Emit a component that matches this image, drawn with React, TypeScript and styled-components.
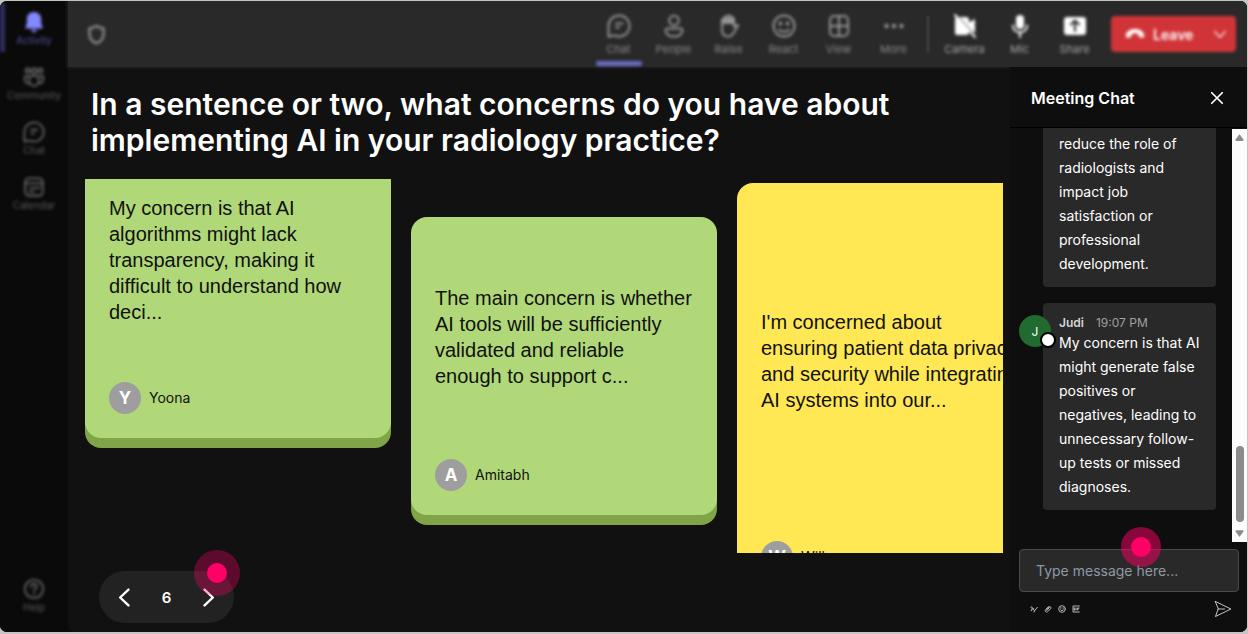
import React from "react";
import styled, { createGlobalStyle } from "styled-components";

const GlobalStyle = createGlobalStyle`
  * { box-sizing: border-box; }
  html, body, #root { height: 100%; }
  body {
    margin: 0;
    background: #c4c6c4;
    font-family: Inter, "Liberation Sans", sans-serif;
  }
  button { font: inherit; color: inherit; background: none; border: 0; padding: 0; cursor: pointer; }
  h1, h2, p { margin: 0; }
`;

const softFocus = "blur(1px) blur(1px)";

const Page = styled.div`
  height: 100%;
  padding: 1px 1px 2px 0;
`;

const Frame = styled.div`
  height: 100%;
  display: flex;
  overflow: hidden;
  border-radius: 7px;
  background: #0a0a0a;
`;

/* ---------- left rail ---------- */

const Rail = styled.nav`
  width: 68px;
  flex: none;
  display: flex;
  flex-direction: column;
  padding: 0 0 9px;
  background: #0a0a0a;
`;

const RailItem = styled.button<{ $active?: boolean; $last?: boolean }>`
  position: relative;
  height: 55px;
  display: flex;
  flex-direction: column;
  align-items: center;
  justify-content: center;
  gap: 1px;
  margin-top: ${(p) => (p.$last ? "auto" : "0")};
  color: ${(p) => (p.$active ? "#5252a0" : "#5c5c5c")};
  font-size: 10px;
  line-height: 12px;
  filter: ${softFocus};

  svg { color: ${(p) => (p.$active ? "#8489ff" : "#666")}; }

  &::before {
    content: "";
    position: absolute;
    left: 0;
    top: 2px;
    bottom: 4px;
    width: 5px;
    background: ${(p) => (p.$active ? "#2f2f60" : "transparent")};
  }
`;

const Content = styled.div`
  flex: 1;
  min-width: 0;
  display: flex;
  flex-direction: column;
  background: #111;
  border-radius: 0 0 0 7px;
`;

/* ---------- top toolbar ---------- */

const Toolbar = styled.header`
  height: 66px;
  flex: none;
  display: flex;
  align-items: center;
  padding: 0 11px 0 18px;
  background: #292929;
  box-shadow: 0 0 3px 1px #222;
`;

const ShieldSlot = styled.span`
  display: flex;
  margin-right: auto;
  color: #868686;
  filter: ${softFocus};
`;

const Tool = styled.button<{ $active?: boolean; $bright?: boolean }>`
  width: 55px;
  height: 66px;
  padding-top: 13px;
  display: flex;
  flex-direction: column;
  align-items: center;
  gap: 4px;
  color: ${(p) => (p.$bright ? "#a8a8a8" : "#8a8a8a")};
  font-size: 11px;
  line-height: 14px;
  filter: ${softFocus};

  svg { color: ${(p) => (p.$bright ? "#fff" : "#969696")}; }

  &::after {
    content: "";
    width: 46px;
    height: 5px;
    margin-top: 1px;
    border-radius: 2px;
    background: ${(p) => (p.$active ? "#6a6cc4" : "transparent")};
  }
`;

const Divider = styled.span`
  width: 2px;
  height: 36px;
  margin: 0 8px 0 6px;
  background: #444;
  filter: blur(1px);
`;

const LeaveButton = styled.button`
  width: 125px;
  height: 36px;
  margin-left: 9px;
  padding: 0 8px 0 14px;
  display: flex;
  align-items: center;
  gap: 8px;
  border-radius: 4px;
  background: #d13438;
  color: #fff;
  font-size: 14px;
  font-weight: 600;
  filter: ${softFocus};

  svg:last-child { margin-left: auto; }
`;

const Body = styled.div`
  flex: 1;
  min-height: 0;
  display: flex;
`;

/* ---------- question board ---------- */

const Stage = styled.main`
  flex: 1;
  min-width: 0;
  display: flex;
  flex-direction: column;
  padding: 19px 7px 9px 17px;
`;

const Question = styled.h1`
  max-width: 840px;
  margin-left: 6px;
  color: #fff;
  font-size: 30px;
  line-height: 36px;
  font-weight: 600;
`;

const Board = styled.section`
  flex: 1;
  min-height: 0;
  margin: 21px 0 18px;
  display: flex;
  align-items: flex-start;
  gap: 20px;
  overflow: hidden;
`;

const Card = styled.article<{ $tone: "green" | "yellow"; $tall?: boolean; $shift: number }>`
  width: 306px;
  height: ${(p) => (p.$tall ? 414 : 298)}px;
  flex: none;
  margin-top: ${(p) => p.$shift}px;
  padding: 24px;
  display: flex;
  flex-direction: column;
  gap: 26px;
  border-radius: 16px;
  background: ${(p) => (p.$tone === "green" ? "#b0d879" : "#ffe853")};
  box-shadow: 0 10px 0 ${(p) => (p.$tone === "green" ? "#7fa548" : "#c9b22c")};
  color: #111;
`;

const CardText = styled.p`
  flex: 1;
  display: flex;
  flex-direction: column;
  justify-content: center;
  font-family: "Liberation Sans", Arial, sans-serif;
  font-size: 20px;
  line-height: 26px;
  white-space: nowrap;
`;

const Author = styled.footer`
  display: flex;
  align-items: center;
  gap: 8px;
  font-size: 14px;
  line-height: 20px;
`;

const AuthorAvatar = styled.span`
  width: 32px;
  height: 32px;
  display: flex;
  align-items: center;
  justify-content: center;
  border-radius: 50%;
  background: #9e9e9e;
  color: #fff;
  font-size: 17px;
  font-weight: 700;
`;

const Pager = styled.div`
  position: relative;
  width: 135px;
  height: 52px;
  flex: none;
  margin-left: 14px;
  padding: 0 16px;
  display: flex;
  align-items: center;
  justify-content: space-between;
  border-radius: 26px;
  background: #222;
  color: #fff;
  font-size: 15px;
  font-weight: 600;

  button { display: flex; }
`;

const Hotspot = styled.span<{ $size: number; $alpha: number; $top: number; $left: string }>`
  position: absolute;
  top: ${(p) => p.$top}px;
  left: ${(p) => p.$left};
  width: ${(p) => p.$size}px;
  height: ${(p) => p.$size}px;
  display: flex;
  align-items: center;
  justify-content: center;
  border-radius: 50%;
  background: rgba(255, 0, 102, ${(p) => p.$alpha});
  pointer-events: none;

  &::after {
    content: "";
    width: 20px;
    height: 20px;
    border-radius: 50%;
    background: #ff0066;
  }
`;

/* ---------- meeting chat ---------- */

const ChatPanel = styled.aside`
  width: 237px;
  flex: none;
  display: flex;
  flex-direction: column;
  background: #0e0e0e;
`;

const ChatHeader = styled.header`
  height: 61px;
  flex: none;
  display: flex;
  align-items: center;
  justify-content: space-between;
  padding: 2px 23px 0 21px;
  border-bottom: 1px solid #000;
  color: #fff;

  h2 { font-size: 16px; line-height: 24px; font-weight: 600; }
  button { display: flex; }
`;

const ChatBody = styled.div`
  flex: 1;
  min-height: 0;
  display: flex;
  justify-content: space-between;
`;

const Messages = styled.div`
  flex: 1;
  min-width: 0;
  display: flex;
  flex-direction: column;
  justify-content: flex-end;
  gap: 16px;
  padding: 0 16px 32px 9px;
  overflow: hidden;
`;

const Message = styled.div`
  flex: none;
  display: flex;
  justify-content: flex-end;
`;

const ChatAvatar = styled.span`
  position: relative;
  z-index: 1;
  width: 32px;
  height: 32px;
  flex: none;
  margin: 12px -8px 0 0;
  display: flex;
  align-items: center;
  justify-content: center;
  border-radius: 50%;
  background: #216a30;
  color: #fff;
  font-size: 12px;

  &::after {
    content: "";
    position: absolute;
    right: -4px;
    bottom: 0;
    width: 12px;
    height: 12px;
    border: 2px solid #000;
    border-radius: 50%;
    background: #fff;
    right: -5px;
    bottom: -1px;
  }
`;

const Bubble = styled.div`
  width: 173px;
  padding: 11px 16px 11px;
  border-radius: 4px;
  background: #292929;
  color: #fff;
  font-size: 14px;
  line-height: 24px;
`;

const BubbleText = styled.p`
  display: flex;
  flex-direction: column;
  white-space: nowrap;
`;

const MessageMeta = styled.div`
  display: flex;
  gap: 12px;
  color: #a0a0a0;
  font-size: 12px;
  line-height: 17px;

  b { color: #d6d6d6; font-weight: 600; }
`;

const ScrollTrack = styled.div`
  width: 15px;
  margin-top: 1px;
  padding: 4px 3px 4px;
  display: flex;
  flex-direction: column;
  align-items: center;
  background: #fcfcfc;
`;

const ScrollThumb = styled.span`
  width: 8px;
  height: 76px;
  margin: auto 0 7px;
  border-radius: 4px;
  background: #8b8b8b;
`;

const Composer = styled.form`
  position: relative;
  flex: none;
  padding: 7px 8px 6px 9px;
`;

const MessageInput = styled.input`
  display: block;
  width: 100%;
  height: 43px;
  padding: 0 16px;
  border: 1px solid #4a4a4a;
  border-radius: 4px;
  outline: 0;
  background: #292929;
  color: #fff;
  font: 14px/20px Inter, "Liberation Sans", sans-serif;

  &::placeholder { color: #8e99a6; opacity: 1; }
`;

const ComposerActions = styled.div`
  height: 34px;
  padding: 0 7px 0 11px;
  display: flex;
  align-items: center;
  gap: 6px;
  color: #b4b4b4;

  button { display: flex; }
  button:last-child { margin-left: auto; color: #fff; }
`;

/* ---------- icons ---------- */

const paths: Record<string, React.ReactNode> = {
  bell: <path fill="currentColor" stroke="none" d="M12 1C7.500 1 4.200 4.300 4.200 8.700v4.800L2.700 17.600c-.2.700.2 1.400 1 1.400h16.600c.8 0 1.200-.7 1-1.400l-1.500-4.100V8.700C19.800 4.300 16.500 1 12 1zM8.500 20.500c.5 1.700 1.800 2.800 3.500 2.800s3-1.100 3.500-2.800z" />,
  community: <><circle cx="12" cy="5.500" r="2.800" /><circle cx="5" cy="5" r="2.300" /><circle cx="19" cy="5" r="2.300" /><path d="M7 11h10v5.500a5 5 0 0 1-10 0zM7 11H2V15a4.500 4.500 0 0 0 5.500 4M17 11h5V15a4.500 4.500 0 0 1-5.500 4" /></>,
  chat: <><path d="M12 1.500a10.500 10.500 0 1 1-4.600 19.900L1.500 22.500V12A10.500 10.500 0 0 1 12 1.500z" /><path d="M9 9.500h6.500M9 13.500h3" /></>,
  calendar: <><rect x="2.500" y="2.500" width="19" height="19" rx="4" /><path d="M2.500 8h19M8 13h10M7 17h5" /></>,
  help: <><circle cx="12" cy="12" r="10" /><path d="M9 9.500c0-4 6-4 6 0 0 2.200-3 2.300-3 4.500M12 17v1" /></>,
  shield: <path d="M12 2c2.500 2 5 3 8 3v6c0 5.500-3 9-8 11-5-2-8-5.500-8-11V5c3 0 5.500-1 8-3z" />,
  people: <><circle cx="12" cy="6.500" r="4.800" /><path d="M5.500 14.500h13a2 2 0 0 1 2 2c0 3.500-3.500 6-8.500 6s-8.500-2.500-8.500-6a2 2 0 0 1 2-2z" /></>,
  raise: <><path d="M5 12V6a1.500 1.500 0 0 1 3 0V3.500a1.500 1.500 0 0 1 3 0V3a1.500 1.500 0 0 1 3 0v2a1.500 1.500 0 0 1 3 0v8l2-2c1-.8 2.500.2 1.800 1.500L16.500 19c-1.300 2.500-3 3.500-5 3.500-4.500 0-6.500-3-6.500-7z" /><path d="M6 5h10v4H6z" fill="currentColor" /></>,
  react: <><circle cx="12" cy="12" r="10.500" /><path d="M7 15.500c2 3 8 3 10 0" /><circle cx="8.500" cy="9.500" r="1" fill="currentColor" /><circle cx="15.500" cy="9.500" r="1" fill="currentColor" /></>,
  view: <><rect x="3" y="2" width="18" height="20" rx="4" /><path d="M12 2v20M3 12h18" /></>,
  more: <g fill="currentColor" stroke="none"><circle cx="4.500" cy="12" r="2.200" /><circle cx="12" cy="12" r="2.200" /><circle cx="19.500" cy="12" r="2.200" /></g>,
  camera: <><path fill="currentColor" stroke="none" d="M4 3h9a3 3 0 0 1 3 3v2.500L22 5v14l-6-3.500V18a3 3 0 0 1-3 3H4a2 2 0 0 1-2-2V5a2 2 0 0 1 2-2z" /><path d="M4 1l20 22" stroke="#292929" strokeWidth="1" /><path d="M2 1l20 22" /></>,
  mic: <><rect x="8" y="1" width="8" height="14" rx="4" fill="currentColor" stroke="none" /><path d="M5 11.500c0 9 14 9 14 0M12 18.500V23" /></>,
  share: <><rect x="1" y="3" width="22" height="18" rx="3" fill="currentColor" stroke="none" /><path d="M12 17V7M8 10.500L12 6.500l4 4" stroke="#292929" /></>,
  hangup: <path fill="currentColor" stroke="none" d="M12 6c5 0 10 2.300 10.800 6.500.3 1.800 0 3.800-1.300 4l-3.700-.6c-1.200-.2-1.500-1-1.600-2l-.2-2c-2.500-1-5.500-1-8 0l-.2 2c-.1 1-.4 1.800-1.600 2l-3.700.6c-1.300-.2-1.600-2.200-1.300-4C2 8.300 7 6 12 6z" />,
  down: <path d="M4 8l8 9 8-9" />,
  prev: <path d="M17 2L6.500 12 17 22" />,
  next: <path d="M7 2l10.500 10L7 22" />,
  close: <path d="M3 3l18 18M21 3L3 21" />,
  format: <><path d="M2 8c2-4 5-4 5 0s-3 6-4 9c3 2 5-8 7-8s-1 7 2 7M13 18L22 7M12 21l2-5" /></>,
  attach: <path d="M7 15l8-9c3-3 8 1 5 5l-9 9c-4 4-10-1-6-6l8-9M9 16l7-8" />,
  smile: <><circle cx="12" cy="12" r="10" /><path d="M7 14c2 4 8 4 10 0M8.500 8v2M15.500 8v2" /></>,
  gif: <><path d="M22 3H3v18h19M8 9H6v6h3v-3M12 9v6M16 15V9h5M16 12h4" /></>,
  send: <path d="M2 2l20.500 10L2 22l3.500-10zM5.500 12H14" />,
  arrowUp: <path fill="currentColor" stroke="none" d="M12 3l11 15q0 3-3 3H4q-3 0-3-3z" />,
  arrowDown: <path fill="currentColor" stroke="none" d="M12 21L1 6q0-3 3-3h16q3 0 3 3z" />,
};

const Icon = ({ name, size = 24, weight = 2 }: { name: string; size?: number; weight?: number }) => (
  <svg width={size} height={size} viewBox="0 0 24 24" fill="none" stroke="currentColor"
    strokeWidth={weight} strokeLinecap="round" strokeLinejoin="round" aria-hidden="true">
    {paths[name]}
  </svg>
);

const ScrollArrow = styled.span`
  display: flex;
  color: #8b8b8b;
`;

const Line = styled.span`
  display: block;
`;

/* ---------- data ---------- */

const railItems = [
  { label: "Activity", icon: "bell", active: true },
  { label: "Community", icon: "community" },
  { label: "Chat", icon: "chat" },
  { label: "Calendar", icon: "calendar" },
];

const meetingTools = [
  { label: "Chat", icon: "chat", active: true },
  { label: "People", icon: "people" },
  { label: "Raise", icon: "raise" },
  { label: "React", icon: "react" },
  { label: "View", icon: "view" },
  { label: "More", icon: "more" },
];

const deviceTools = [
  { label: "Camera", icon: "camera" },
  { label: "Mic", icon: "mic" },
  { label: "Share", icon: "share" },
];

const cards = [
  {
    author: "Yoona", tone: "green" as const, shift: -39,
    lines: ["My concern is that AI", "algorithms might lack", "transparency, making it", "difficult to understand how", "deci..."],
  },
  {
    author: "Amitabh", tone: "green" as const, shift: 38,
    lines: ["The main concern is whether", "AI tools will be sufficiently", "validated and reliable", "enough to support c..."],
  },
  {
    author: "Will", tone: "yellow" as const, shift: 4, tall: true,
    lines: ["I'm concerned about", "ensuring patient data privacy", "and security while integrating", "AI systems into our..."],
  },
];

const earlierMessage = ["reduce the role of", "radiologists and", "impact job", "satisfaction or", "professional", "development."];
const judiMessage = ["My concern is that AI", "might generate false", "positives or", "negatives, leading to", "unnecessary follow-", "up tests or missed", "diagnoses."];

const lines = (items: string[]) => items.map((text) => <Line key={text}>{text} </Line>);

export default function App() {
  return (
    <Page>
      <GlobalStyle />
      <Frame>
        <Rail aria-label="Apps">
          {railItems.map((item) => (
            <RailItem key={item.label} type="button" $active={item.active}>
              <Icon name={item.icon} size={22} />
              {item.label}
            </RailItem>
          ))}
          <RailItem type="button" $last>
            <Icon name="help" size={22} />
            Help
          </RailItem>
        </Rail>

        <Content>
          <Toolbar>
            <ShieldSlot><Icon name="shield" size={21} weight={3} /></ShieldSlot>
            {meetingTools.map((tool) => (
              <Tool key={tool.label} type="button" $active={tool.active}>
                <Icon name={tool.icon} size={24} />
                {tool.label}
              </Tool>
            ))}
            <Divider />
            {deviceTools.map((tool) => (
              <Tool key={tool.label} type="button" $bright>
                <Icon name={tool.icon} size={24} />
                {tool.label}
              </Tool>
            ))}
            <LeaveButton type="button">
              <Icon name="hangup" size={20} />
              Leave
              <Icon name="down" size={16} />
            </LeaveButton>
          </Toolbar>

          <Body>
            <Stage>
              <Question>In a sentence or two, what concerns do you have about implementing AI in your radiology practice?</Question>
              <Board aria-label="Responses">
                {cards.map((card) => (
                  <Card key={card.author} $tone={card.tone} $tall={card.tall} $shift={card.shift}>
                    <CardText>{lines(card.lines)}</CardText>
                    <Author>
                      <AuthorAvatar>{card.author[0]}</AuthorAvatar>
                      {card.author}
                    </Author>
                  </Card>
                ))}
              </Board>
              <Pager>
                <button type="button" aria-label="Previous"><Icon name="prev" size={19} weight={3} /></button>
                <span>6</span>
                <button type="button" aria-label="Next"><Icon name="next" size={19} weight={3} /></button>
                <Hotspot $size={46} $alpha={0.32} $top={-21} $left="95px" />
              </Pager>
            </Stage>

            <ChatPanel>
              <ChatHeader>
                <h2>Meeting Chat</h2>
                <button type="button" aria-label="Close chat"><Icon name="close" size={14} weight={3} /></button>
              </ChatHeader>
              <ChatBody>
                <Messages>
                  <Message>
                    <Bubble><BubbleText>{lines(earlierMessage)}</BubbleText></Bubble>
                  </Message>
                  <Message>
                    <ChatAvatar>J</ChatAvatar>
                    <Bubble>
                      <MessageMeta><b>Judi</b><span>19:07 PM</span></MessageMeta>
                      <BubbleText>{lines(judiMessage)}</BubbleText>
                    </Bubble>
                  </Message>
                </Messages>
                <ScrollTrack aria-hidden="true">
                  <ScrollArrow><Icon name="arrowUp" size={9} /></ScrollArrow>
                  <ScrollThumb />
                  <ScrollArrow><Icon name="arrowDown" size={9} /></ScrollArrow>
                </ScrollTrack>
              </ChatBody>
              <Composer onSubmit={(e) => e.preventDefault()}>
                <MessageInput aria-label="Message" placeholder="Type message here..." />
                <ComposerActions>
                  <button type="button" aria-label="Format"><Icon name="format" size={8} weight={3} /></button>
                  <button type="button" aria-label="Attach"><Icon name="attach" size={8} weight={3} /></button>
                  <button type="button" aria-label="Emoji"><Icon name="smile" size={8} weight={3} /></button>
                  <button type="button" aria-label="GIF"><Icon name="gif" size={8} weight={3} /></button>
                  <button type="submit" aria-label="Send"><Icon name="send" size={18} weight={1} /></button>
                </ComposerActions>
                <Hotspot $size={40} $alpha={0.5} $top={-15} $left="calc(50% - 8px)" />
              </Composer>
            </ChatPanel>
          </Body>
        </Content>
      </Frame>
    </Page>
  );
}
